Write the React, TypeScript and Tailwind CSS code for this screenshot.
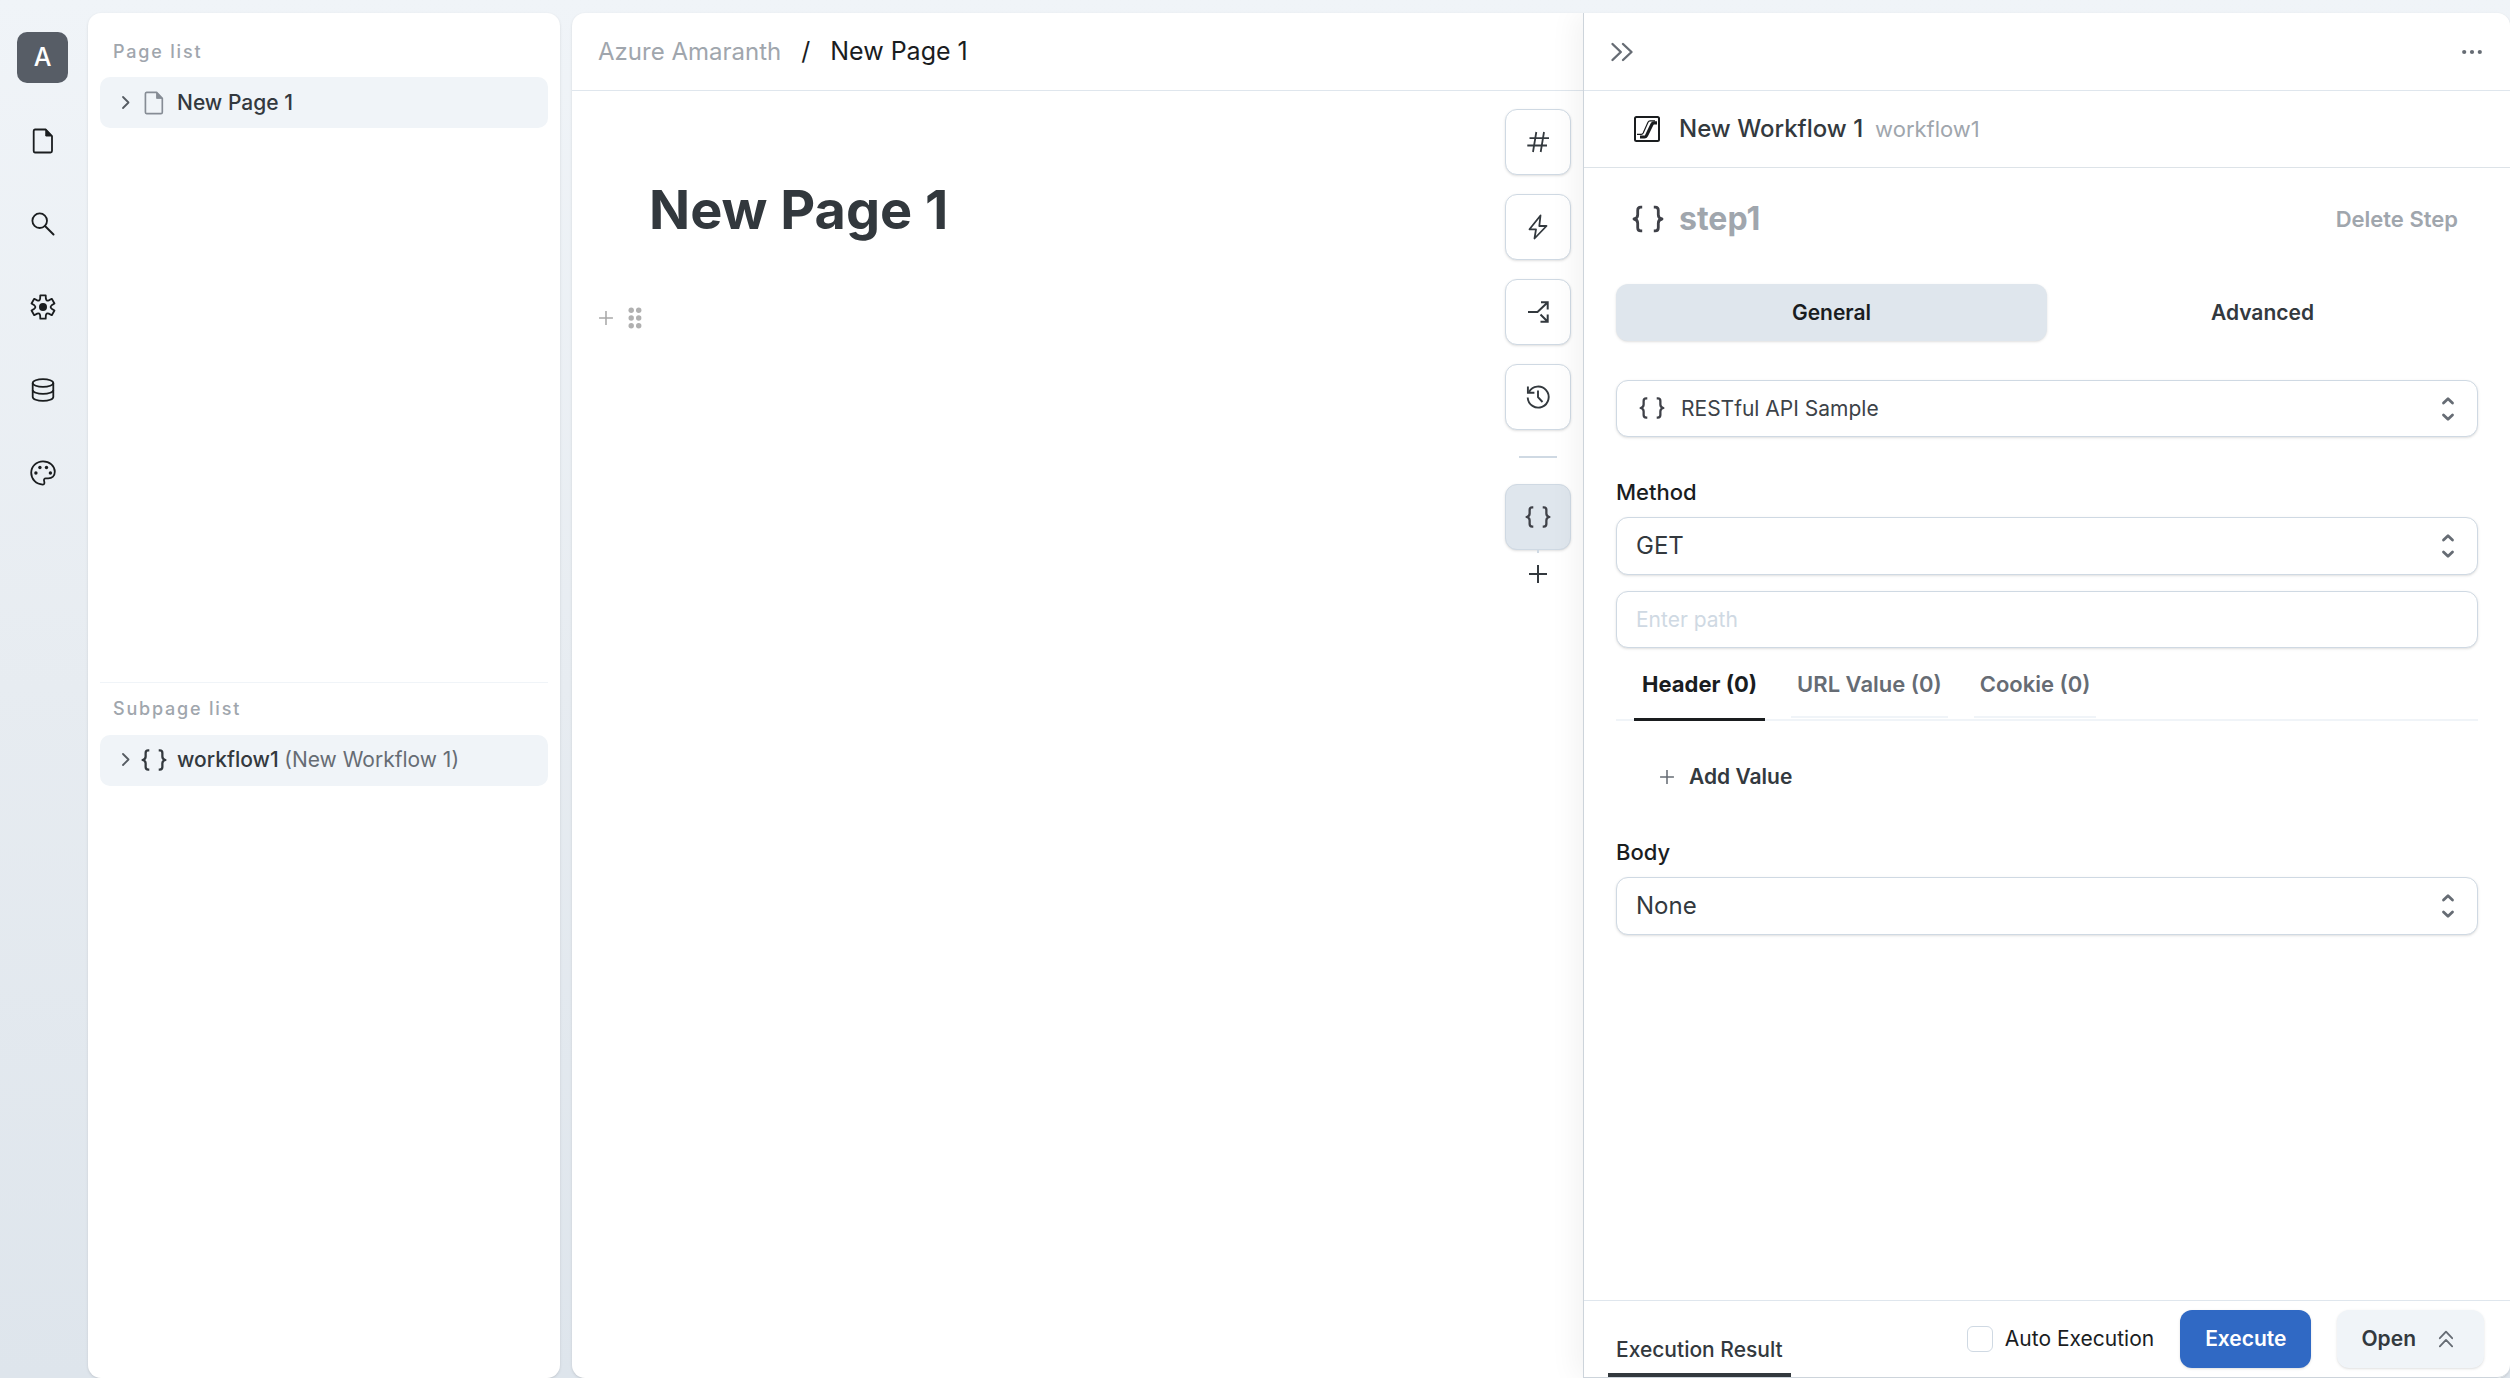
import type { ReactNode } from 'react';

type IconProps = { size?: number; className?: string };

function FileIcon({ size = 26, className }: IconProps) {
  return (
    <svg width={size} height={size} viewBox="0 0 26 26" fill="none" stroke="currentColor" strokeWidth="1.8" strokeLinejoin="round" className={className} aria-hidden="true">
      <path d="M5 1.5h10.8L22 8v15a1.5 1.5 0 0 1-1.5 1.5H5A1.5 1.5 0 0 1 3.7 23V3A1.5 1.5 0 0 1 5 1.5Z" />
      <path d="M15.8 1.5V8H22Z" fill="currentColor" strokeWidth="1" />
    </svg>
  );
}

function SearchIcon() {
  return (
    <svg width="26" height="26" viewBox="0 0 26 26" fill="none" stroke="currentColor" strokeWidth="1.8" strokeLinecap="round" aria-hidden="true">
      <circle cx="9.700" cy="9.700" r="7.300" />
      <path d="m15 15 8.500 8.500" strokeWidth="2" />
    </svg>
  );
}

const gearPath = (() => {
  const at = (deg: number, r: number) => {
    const a = (deg * Math.PI) / 180;
    return `${(13 + r * Math.sin(a)).toFixed(2)} ${(13 - r * Math.cos(a)).toFixed(2)}`;
  };
  const parts: string[] = [];
  for (let i = 0; i < 6; i++) {
    const t = i * 60;
    parts.push(`${i === 0 ? 'M' : 'L'}${at(t - 13, 12)}L${at(t + 13, 12)}L${at(t + 19, 8.8)}Q${at(t + 30, 6.6)} ${at(t + 41, 8.8)}`);
  }
  return parts.join('') + 'Z';
})();

function GearIcon() {
  return (
    <svg width="26" height="26" viewBox="0 0 26 26" fill="none" stroke="currentColor" strokeWidth="1.8" strokeLinejoin="round" aria-hidden="true">
      <path d={gearPath} />
      <circle cx="13" cy="13" r="4" fill="currentColor" stroke="none" />
    </svg>
  );
}

function DatabaseIcon() {
  return (
    <svg width="26" height="26" viewBox="0 0 26 26" fill="none" stroke="currentColor" strokeWidth="1.8" aria-hidden="true">
      <ellipse cx="13" cy="6" rx="10.300" ry="3.900" />
      <path d="M2.700 6v14c0 2.200 4.600 3.900 10.300 3.900S23.300 22.200 23.300 20V6" />
      <path d="M2.700 13c0 2.200 4.600 3.900 10.300 3.900S23.300 15.200 23.300 13" />
    </svg>
  );
}

function PaletteIcon() {
  return (
    <svg width="26" height="26" viewBox="0 0 26 26" fill="none" stroke="currentColor" strokeWidth="1.8" strokeLinejoin="round" aria-hidden="true">
      <path d="M12.800 24.600C6 24.400 1.200 19 1.200 12.800 1.200 6.300 6.500 1.300 13 1.300c6.600 0 11.800 4.700 11.800 10.500 0 4-2.700 6.600-6.600 6.600h-2.400c-1.500 0-2.200 1.100-1.700 2.500.5 1.600.6 3.700-1.300 3.700Z" />
      <g fill="currentColor" stroke="none">
        <circle cx="5.900" cy="13" r="1.700" />
        <circle cx="9.900" cy="7.500" r="1.700" />
        <circle cx="16.500" cy="7.500" r="1.700" />
        <circle cx="20.400" cy="13" r="1.700" />
      </g>
    </svg>
  );
}

function HashIcon() {
  return (
    <svg width="26" height="26" viewBox="0 0 26 26" fill="none" stroke="currentColor" strokeWidth="1.8" aria-hidden="true">
      <path d="M11.300 3 8 23M19 3l-3.300 20M4.500 9.200h19.500M2.300 16.500H22" />
    </svg>
  );
}

function ZapIcon() {
  return (
    <svg width="26" height="26" viewBox="0 0 26 26" fill="none" stroke="currentColor" strokeWidth="1.8" strokeLinejoin="round" aria-hidden="true">
      <path d="M15.500 1.500 4.500 15.300H11L9.500 24.500 21.500 12H14.300Z" />
    </svg>
  );
}

function BranchIcon() {
  return (
    <svg width="26" height="26" viewBox="0 0 26 26" fill="none" stroke="currentColor" strokeWidth="2" aria-hidden="true">
      <path d="M3 13h9.500L22.500 3.500M16 3.200h6.700V10.500M15.500 15.500l7 7M22.700 15.500v7.300H15.500" />
    </svg>
  );
}

function HistoryIcon() {
  return (
    <svg width="26" height="26" viewBox="0 0 26 26" fill="none" stroke="currentColor" strokeWidth="1.900" aria-hidden="true">
      <path d="M2.700 13.500A10.500 10.500 0 1 0 4 8" />
      <path d="M2.900 2.500v6.300h6.500M13 6.500V13.200l4.500 4.800" />
    </svg>
  );
}

function BracesIcon({ size = 26, className }: IconProps) {
  return (
    <svg width={size} height={size} viewBox="0 0 32 32" fill="none" stroke="currentColor" strokeWidth="2.800" strokeLinejoin="round" className={className} aria-hidden="true">
      <path d="M10.200 4.200H8.800C6.700 4.200 5.700 5.300 5.700 7.300v4.500c0 2.400-1 3.700-3.700 4.200 2.700.5 3.700 1.800 3.700 4.200v4.500c0 2 1 3.100 3.100 3.100h1.400" />
      <path d="M21.800 4.200h1.400c2.100 0 3.100 1.100 3.100 3.100v4.500c0 2.400 1 3.700 3.700 4.200-2.700.5-3.700 1.800-3.700 4.200v4.500c0 2-1 3.100-3.100 3.100h-1.400" />
    </svg>
  );
}

function PlusIcon({ size = 26, className }: IconProps) {
  return (
    <svg width={size} height={size} viewBox="0 0 26 26" fill="none" stroke="currentColor" strokeWidth="2" className={className} aria-hidden="true">
      <path d="M13 4v18M4 13h18" />
    </svg>
  );
}

function ChevronIcon({ className }: IconProps) {
  return (
    <svg width="24" height="24" viewBox="0 0 24 24" fill="none" stroke="currentColor" strokeWidth="1.8" strokeLinecap="round" strokeLinejoin="round" className={className} aria-hidden="true">
      <path d="m10 6 5.500 5.500L10 17" />
    </svg>
  );
}

function DoubleChevronIcon({ size = 26, className }: IconProps) {
  return (
    <svg width={size} height={size} viewBox="0 0 26 26" fill="none" stroke="currentColor" strokeWidth="2.400" strokeLinecap="round" strokeLinejoin="round" className={className} aria-hidden="true">
      <path d="m3.500 5 8.300 8-8.300 8M14 5l8.500 8-8.500 8" />
    </svg>
  );
}

function WorkflowIcon() {
  return (
    <svg width="28" height="28" viewBox="0 0 28 28" fill="none" stroke="currentColor" strokeWidth="2" strokeLinejoin="round" aria-hidden="true">
      <rect x="2" y="2" width="24" height="24" rx="1.500" />
      <path d="M7 22h4.500c1 0 1.500-.4 2-1.400L19 9.300c.5-1 1-1.400 2-1.400h3" strokeWidth="3.200" />
      <path d="M4 19.300h4.200c1 0 1.500-.4 2-1.400L15 7.300c.5-1 1-1.500 2-1.500h5" strokeWidth="1.200" />
    </svg>
  );
}

function Carets() {
  return (
    <svg width="26" height="26" viewBox="0 0 26 26" fill="none" stroke="currentColor" strokeWidth="2.800" strokeLinecap="round" strokeLinejoin="round" className="pointer-events-none absolute right-[17px] top-1/2 -translate-y-1/2 text-[#666c74]" aria-hidden="true">
      <path d="m8.500 7 4.500-4.300L17.500 7M8.500 19l4.500 4.300 4.500-4.300" />
    </svg>
  );
}

function TreeRow({ icon, children }: { icon: ReactNode; children: ReactNode }) {
  return (
    <button type="button" className="flex h-[51px] w-full items-center rounded-[10px] bg-[#f0f4f8] pl-[13px] text-left text-[21px]/[32px] font-medium text-[#33393e]">
      <ChevronIcon className="text-[#555b62]" />
      <span className="ml-1 mr-[10px] flex w-[26px] justify-center">{icon}</span>
      <span>{children}</span>
    </button>
  );
}

function SelectBox({ id, value, label, icon }: { id: string; value: string; label?: string; icon?: ReactNode }) {
  return (
    <div className="relative">
      {icon}
      <select
        id={id}
        aria-label={label}
        className={
          icon
            ? 'block h-[57px] w-full appearance-none rounded-[12px] border border-[#cfd9e3] bg-white pl-16 pr-14 text-[21px] text-[#3c4248] shadow-sm'
            : 'block h-[58px] w-full appearance-none rounded-[12px] border border-[#cfd9e3] bg-white pl-[19px] pr-14 text-[24px] text-[#33393e] shadow-sm'
        }
      >
        <option>{value}</option>
      </select>
      <Carets />
    </div>
  );
}

const navItems: { name: string; icon: ReactNode }[] = [
  { name: 'Pages', icon: <FileIcon /> },
  { name: 'Search', icon: <SearchIcon /> },
  { name: 'Settings', icon: <GearIcon /> },
  { name: 'Data', icon: <DatabaseIcon /> },
  { name: 'Theme', icon: <PaletteIcon /> },
];

const tools: { name: string; icon: ReactNode }[] = [
  { name: 'Variables', icon: <HashIcon /> },
  { name: 'Triggers', icon: <ZapIcon /> },
  { name: 'Branches', icon: <BranchIcon /> },
  { name: 'History', icon: <HistoryIcon /> },
];

function Sidebar() {
  return (
    <nav aria-label="Main" className="flex w-[88px] shrink-0 flex-col gap-8 pl-[17px] pt-8">
      <button type="button" className="flex size-[51px] items-center justify-center rounded-[10px] bg-[#575d66] text-[25px] font-medium text-white">A</button>
      {navItems.map((item) => (
        <button key={item.name} type="button" aria-label={item.name} className="flex size-[51px] items-center justify-center text-[#1a1d1f]">
          {item.icon}
        </button>
      ))}
    </nav>
  );
}

function PageTree() {
  return (
    <aside className="flex w-[472px] shrink-0 flex-col rounded-[13px] bg-white px-3 shadow-sm">
      <section className="h-[49%] pt-[13px]">
        <h2 className="flex h-[51px] items-center px-[13px] text-[18px] font-medium tracking-widest text-[#a0a6ad]">Page list</h2>
        <TreeRow icon={<FileIcon size={24} className="text-[#868c95]" />}>New Page 1</TreeRow>
      </section>
      <section className="border-t border-[#f0f4f8]">
        <h2 className="flex h-[52px] items-center px-[13px] text-[18px] font-medium tracking-widest text-[#a0a6ad]">Subpage list</h2>
        <TreeRow icon={<BracesIcon />}>
          workflow1 <span className="font-normal text-[#666c74]">(New Workflow 1)</span>
        </TreeRow>
      </section>
    </aside>
  );
}

function Editor() {
  return (
    <main className="flex min-w-0 flex-1 flex-col">
      <header className="flex h-[78px] shrink-0 items-center gap-5 border-b border-[#dfe6ed] pl-[26px] text-[25px] text-[#1a1d1f]">
        <a href="#project" className="text-[24px] text-[#a0a6ad]">Azure Amaranth</a>
        <span>/</span>
        <span>New Page 1</span>
      </header>
      <div className="flex flex-1">
        <article className="min-w-0 flex-1">
          <h1 className="pl-[77px] pt-[83px] text-[54px]/[72px] font-bold text-[#32383d]">New Page 1</h1>
          <div className="mt-[52px] flex h-10 items-center gap-[9px] pl-6 text-[#a8a8a8]">
            <button type="button" aria-label="Add block"><PlusIcon size={20} /></button>
            <button type="button" aria-label="Move block">
              <svg width="20" height="26" viewBox="0 0 20 26" fill="#b0b0b0" aria-hidden="true">
                {[5.3, 13, 20.7].map((y) => (
                  <g key={y}>
                    <circle cx="6.200" cy={y} r="2.700" />
                    <circle cx="13.700" cy={y} r="2.700" />
                  </g>
                ))}
              </svg>
            </button>
          </div>
        </article>
        <div className="flex flex-col items-center pr-3 pt-[18px] text-[#33393e]">
          <div className="flex flex-col gap-[19px]">
            {tools.map((tool) => (
              <button key={tool.name} type="button" aria-label={tool.name} className="flex size-[66px] items-center justify-center rounded-[12px] border border-[#cfd9e3] bg-white shadow-sm">
                {tool.icon}
              </button>
            ))}
          </div>
          <hr className="my-[26px] h-0.5 w-[38px] border-0 bg-[#cfd9e3]" />
          <button type="button" aria-label="step1" className="flex size-[66px] items-center justify-center rounded-[12px] border border-[#cfd9e3] bg-[#dfe6ed] shadow-sm">
            <BracesIcon className="text-[#3f4148]" />
          </button>
          <span className="h-[3px] w-0.5 bg-[#cfd9e3]" />
          <button type="button" aria-label="Add step" className="mt-2"><PlusIcon /></button>
        </div>
      </div>
    </main>
  );
}

function StepPanel() {
  return (
    <aside className="flex w-[927px] shrink-0 flex-col rounded-r-[13px] border-b border-l border-[#cdd4db] bg-white shadow-[-8px_0_28px_rgba(0,0,0,0.05)]">
      <header className="flex h-[78px] shrink-0 items-center justify-between border-b border-[#dfe6ed] px-[25px] text-[#666c74]">
        <button type="button" aria-label="Collapse panel"><DoubleChevronIcon /></button>
        <button type="button" aria-label="More">
          <svg width="26" height="26" viewBox="0 0 26 26" fill="currentColor" aria-hidden="true">
            <circle cx="5.200" cy="13" r="2.100" />
            <circle cx="13" cy="13" r="2.100" />
            <circle cx="20.800" cy="13" r="2.100" />
          </svg>
        </button>
      </header>
      <div className="flex h-[77px] shrink-0 items-center border-b border-[#dde3e8] pl-[49px] text-[#1a1d1f]">
        <WorkflowIcon />
        <span className="ml-[18px] text-[24px] font-medium text-[#33393e]">New Workflow 1</span>
        <span className="ml-3 text-[22px] text-[#a0a6ad]">workflow1</span>
      </div>
      <div className="flex-1 px-8">
        <div className="flex h-[102px] items-center">
          <BracesIcon size={32} className="ml-4 text-[#3f4148]" />
          <h2 className="ml-[15px] flex-1 text-[32px] font-bold text-[#a0a6ad]">step1</h2>
          <button type="button" className="px-5 text-[22px] font-semibold text-[#a0a6ad]">Delete Step</button>
        </div>
        <div role="tablist" className="mt-[14px] grid grid-cols-2 text-[21px] font-semibold">
          <button type="button" role="tab" aria-selected="true" className="h-[57px] rounded-[12px] bg-[#dfe6ed] text-[#1a1d1f] shadow-sm">General</button>
          <button type="button" role="tab" aria-selected="false" className="h-[57px] text-[#33393e]">Advanced</button>
        </div>
        <div className="mt-[39px]">
          <SelectBox id="resource" label="Resource" value="RESTful API Sample" icon={<BracesIcon className="pointer-events-none absolute left-[23px] top-[15px] text-[#3f4148]" />} />
        </div>
        <label htmlFor="method" className="mb-[9px] mt-[39px] block text-[22px]/[32px] font-medium text-[#1a1d1f]">Method</label>
        <SelectBox id="method" value="GET" />
        <input aria-label="Path" placeholder="Enter path" className="mt-4 block h-[57px] w-full rounded-[12px] border border-[#cfd9e3] bg-white px-[19px] text-[21px] text-[#33393e] shadow-sm placeholder:text-[#cfd9e3]" />
        <div role="tablist" className="flex items-end gap-[26px] border-b-2 border-[#f0f4f8] pl-[18px] text-[22px]">
          <button type="button" role="tab" aria-selected="true" className="-mb-0.5 h-[73px] border-b-[3px] border-[#1a1d1f] px-2 pt-0.5 font-bold text-[#1a1d1f]">Header (0)</button>
          <button type="button" role="tab" aria-selected="false" className="mb-px h-[70px] border-b-2 border-[#f0f4f8] px-[6px] pt-1 font-semibold text-[#666c74]">URL Value (0)</button>
          <button type="button" role="tab" aria-selected="false" className="mb-px h-[70px] border-b-2 border-[#f0f4f8] px-[6px] pt-1 font-semibold text-[#666c74]">Cookie (0)</button>
        </div>
        <button type="button" className="ml-[41px] mt-[30px] flex h-[52px] items-center gap-3 text-[21px] font-semibold text-[#33393e]">
          <PlusIcon size={20} className="text-[#666c74]" />
          Add Value
        </button>
        <label htmlFor="body" className="mb-[9px] mt-[33px] block text-[22px]/[32px] font-medium text-[#1a1d1f]">Body</label>
        <SelectBox id="body" value="None" />
      </div>
      <footer className="flex h-[77px] shrink-0 items-center gap-[26px] border-t border-[#dfe6ed] pl-6 pr-[26px] text-[21px]">
        <button type="button" className="h-full border-b-4 border-[#33393e] px-2 pt-[26px] font-medium text-[#33393e]">Execution Result</button>
        <label className="ml-auto flex items-center gap-3 text-[#1a1d1f]">
          <input type="checkbox" className="size-[26px] appearance-none rounded-[6px] border border-[#cfd9e3] bg-white checked:bg-[#3069c4]" />
          Auto Execution
        </label>
        <button type="button" className="h-[58px] rounded-[12px] bg-[#3069c4] px-[25px] font-semibold text-white shadow-sm">Execute</button>
        <button type="button" className="flex h-[58px] items-center gap-5 rounded-[12px] bg-[#f0f4f8] pl-6 pr-7 font-semibold text-[#33393e] shadow-sm">
          Open
          <DoubleChevronIcon size={20} className="-rotate-90 text-[#666c74]" />
        </button>
      </footer>
    </aside>
  );
}

export default function App() {
  return (
    <div className="flex h-screen bg-linear-to-b from-[#f0f4f8] via-[#e7ecf1] to-[#dee5ec] font-['Inter',sans-serif]">
      <Sidebar />
      <div className="flex min-w-0 flex-1 gap-3 pt-[13px]">
        <PageTree />
        <div className="flex min-w-0 flex-1 overflow-hidden rounded-[13px] bg-white shadow-sm">
          <Editor />
          <StepPanel />
        </div>
      </div>
    </div>
  );
}
